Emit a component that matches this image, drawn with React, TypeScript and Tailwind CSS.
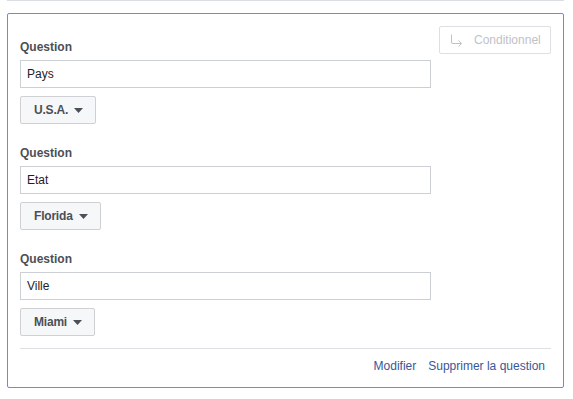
const questions = [
  { label: "Question", value: "Pays", answer: "U.S.A." },
  { label: "Question", value: "Etat", answer: "Florida" },
  { label: "Question", value: "Ville", answer: "Miami" },
];

function Caret() {
  return (
    <svg width="9" height="5" viewBox="0 0 9 5" className="ml-[6px]">
      <path d="M0 0 H9 L4.5 5 Z" fill="#4b4f56" />
    </svg>
  );
}

function ConditionIcon() {
  return (
    <svg width="13" height="13" viewBox="0 0 13 13" fill="none">
      <path d="M1.5 0.5 V8 Q1.5 9.5 3 9.5 H11.5" stroke="#bec2c9" strokeWidth="1" />
      <path d="M8.5 6.5 L11.5 9.5 L8.5 12.5" stroke="#bec2c9" strokeWidth="1" />
    </svg>
  );
}

function QuestionBlock({
  label,
  value,
  answer,
  first,
}: {
  label: string;
  value: string;
  answer: string;
  first?: boolean;
}) {
  return (
    <div className={first ? "" : "mt-[21px]"}>
      <div className="text-[12px] leading-[16px] font-bold text-[#4b4f56]">{label}</div>
      <div className="mt-[5px] h-[28px] w-[411px] border border-[#ccd0d5] bg-white flex items-center pl-[6px] text-[12px] text-[#1d2129]">
        {value}
      </div>
      <button className="mt-[8px] h-[28px] flex items-center border border-[#ced0d4] bg-[#f6f7f9] rounded-[2px] pl-[13px] pr-[12px] text-[12px] font-bold tracking-[-0.2px] text-[#4b4f56]">
        {answer}
        <Caret />
      </button>
    </div>
  );
}

export default function App() {
  return (
    <div className="w-[573px] h-[399px] bg-white px-[7px] font-['Liberation_Sans',Arial,sans-serif]">
      <div className="h-[1px] w-[557px] bg-[#dadde1]" />
      <div className="mt-[12px] w-[557px] h-[375px] border border-[#5890ff] rounded-[2px] p-3 flex flex-col">
        <div className="flex justify-between">
          <div className="pt-[13px]">
            {questions.map((q, i) => (
              <QuestionBlock key={i} {...q} first={i === 0} />
            ))}
          </div>
          <button className="h-[28px] w-[112px] flex items-center border border-[#dddfe2] rounded-[2px] bg-white pl-[10px] text-[12px] text-[#bec2c9]">
            <ConditionIcon />
            <span className="ml-[11px]">Conditionnel</span>
          </button>
        </div>
        <div className="mt-[12px] h-[1px] bg-[#dddfe2]" />
        <div className="mt-[9px] flex justify-end gap-[12px] pr-[6px] text-[12px] leading-[16px] text-[#365899]">
          <a>Modifier</a>
          <a>Supprimer la question</a>
        </div>
      </div>
    </div>
  );
}
